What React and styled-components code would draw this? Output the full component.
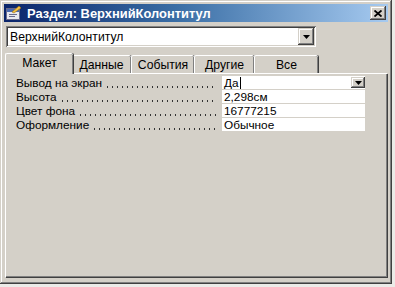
import * as React from 'react';
import styled, { createGlobalStyle } from 'styled-components';

const FACE = '#d4d0c8';
const FONT = '"Liberation Sans", Arial, sans-serif';
const TEXT_SIZE = '11.8px';

const TABS = ['Макет', 'Данные', 'События', 'Другие', 'Все'];
const TAB_WIDTHS = [64, 60, 63, 60, 64];

const PROPERTIES = [
  { label: 'Вывод на экран', value: 'Да', dropdown: true },
  { label: 'Высота', value: '2,298см' },
  { label: 'Цвет фона', value: '16777215' },
  { label: 'Оформление', value: 'Обычное' },
];

const GlobalStyle = createGlobalStyle`
  html, body {
    margin: 0;
    padding: 0;
    background: #ecebe8;
  }
  body {
    font-family: ${FONT};
    font-size: 12px;
  }
`;

const Window = styled.div`
  box-sizing: border-box;
  width: 392px;
  height: 284px;
  padding: 4px;
  background: ${FACE};
  display: flex;
  flex-direction: column;
  box-shadow:
    inset -1px -1px #404040,
    inset 1px 1px ${FACE},
    inset -2px -2px #808080,
    inset 2px 2px #ffffff;
`;

const TitleBar = styled.div`
  height: 18px;
  display: flex;
  align-items: center;
  padding: 0 2px 0 2px;
  background: linear-gradient(to right, #0a246a 0%, #3a6ea5 45%, #a6caf0 100%);
`;

const Title = styled.div`
  flex: 1;
  margin-left: 6px;
  color: #fff;
  font-family: ${FONT};
  font-weight: bold;
  font-size: 12.9px;
  white-space: nowrap;
`;

const BevelButton = styled.div`
  box-sizing: border-box;
  width: ${(p) => p.$w}px;
  height: ${(p) => p.$h}px;
  background: ${FACE};
  display: flex;
  align-items: center;
  justify-content: center;
  box-shadow:
    inset -1px -1px #404040,
    inset 1px 1px ${FACE},
    inset -2px -2px #808080,
    inset 2px 2px #ffffff;
`;

const Body = styled.div`
  flex: 1;
  display: flex;
  flex-direction: column;
  padding: 4px 1px 3px 1px;
`;

const Combo = styled.div`
  box-sizing: border-box;
  width: 310px;
  height: 21px;
  margin-left: 1px;
  padding: 2px;
  background: #fff;
  display: flex;
  align-items: center;
  box-shadow:
    inset 1px 1px #808080,
    inset -1px -1px #ffffff,
    inset 2px 2px #404040,
    inset -2px -2px ${FACE};
`;

const ComboText = styled.div`
  flex: 1;
  padding-left: 2px;
  color: #000;
  font-size: 12.2px;
`;

const TabStrip = styled.div`
  display: flex;
  align-items: flex-end;
  height: 20px;
  margin-top: 6px;
  padding-left: 2px;
`;

const Tab = styled.div`
  box-sizing: border-box;
  width: ${(p) => p.$w + (p.$active ? 4 : 0)}px;
  height: ${(p) => (p.$active ? 21 : 18)}px;
  margin: 0 ${(p) => (p.$active ? -2 : 0)}px ${(p) => (p.$active ? -1 : 0)}px;
  position: relative;
  z-index: ${(p) => (p.$active ? 1 : 0)};
  display: flex;
  align-items: center;
  justify-content: center;
  padding-bottom: ${(p) => (p.$active ? 2 : 0)}px;
  background: ${FACE};
  color: #000;
  font-size: 12.2px;
  border-top: 1px solid #fff;
  border-left: 1px solid #fff;
  border-radius: 2px 2px 0 0;
  box-shadow: inset -1px 0 #808080, 1px 0 #404040;
`;

const Panel = styled.div`
  flex: 1;
  box-sizing: border-box;
  padding: 2px 22px 0 0;
  display: flex;
  flex-direction: column;
  gap: 1px;
  border-top: 1px solid #fff;
  border-left: 1px solid #fff;
  box-shadow: inset -1px -1px #808080, 1px 1px #404040;
`;

const Row = styled.div`
  display: flex;
  height: 13px;
  align-items: stretch;
`;

const Label = styled.div`
  width: 216px;
  box-sizing: border-box;
  padding-left: 10px;
  display: flex;
  align-items: center;
  color: #000;
  font-size: ${TEXT_SIZE};
  white-space: nowrap;
`;

const Leader = styled.div`
  flex: 1;
  align-self: stretch;
  margin: 0 6px 0 5px;
  background-image: linear-gradient(to right, #333 1.5px, transparent 1.5px);
  background-size: 5px 2px;
  background-repeat: repeat-x;
  background-position: 0 10px;
`;

const Value = styled.div`
  flex: 1;
  display: flex;
  align-items: center;
  background: #fff;
  padding-left: 2px;
  color: #000;
  font-size: ${TEXT_SIZE};
  white-space: nowrap;
`;

const Caret = styled.span`
  display: inline-block;
  width: 1px;
  height: 12px;
  background: #000;
  margin-left: 1px;
`;

const Fill = styled.div`
  flex: 1;
`;

const Arrow = () => (
  <svg width="7" height="4" viewBox="0 0 7 4">
    <path d="M0 0h7L3.5 4z" fill="#000" />
  </svg>
);

const CloseIcon = () => (
  <svg width="8" height="7" viewBox="0 0 8 7">
    <path d="M0.5 0.5L7.5 6.5M7.5 0.5L0.5 6.5" stroke="#000" strokeWidth="1.8" />
  </svg>
);

const FormIcon = () => (
  <svg width="15" height="14" viewBox="0 0 15 14">
    <rect x="0.5" y="2.5" width="13" height="11" fill="#e8e8f0" stroke="#6a6a8a" />
    <rect x="1" y="3" width="12" height="3" fill="#4a6ab0" />
    <rect x="3" y="8" width="8" height="1" fill="#6a6a8a" />
    <rect x="3" y="10" width="6" height="1" fill="#6a6a8a" />
    <path d="M6 6L13 0L15 2L8 7z" fill="#f4c040" stroke="#a07010" strokeWidth="0.6" />
  </svg>
);

const App = () => (
  <>
    <GlobalStyle />
    <Window>
      <TitleBar>
        <FormIcon />
        <Title>Раздел: ВерхнийКолонтитул</Title>
        <BevelButton $w={16} $h={14}>
          <CloseIcon />
        </BevelButton>
      </TitleBar>
      <Body>
        <Combo>
          <ComboText>ВерхнийКолонтитул</ComboText>
          <BevelButton $w={16} $h={17}>
            <Arrow />
          </BevelButton>
        </Combo>
        <TabStrip>
          {TABS.map((tab, i) => (
            <Tab key={tab} $w={TAB_WIDTHS[i]} $active={i === 0}>{tab}</Tab>
          ))}
        </TabStrip>
        <Panel>
          {PROPERTIES.map((prop) => (
            <Row key={prop.label}>
              <Label>
                {prop.label}
                <Leader />
              </Label>
              <Value>
                {prop.value}
                {prop.dropdown && <Caret />}
                {prop.dropdown && <Fill />}
                {prop.dropdown && (
                  <BevelButton $w={14} $h={11}>
                    <Arrow />
                  </BevelButton>
                )}
              </Value>
            </Row>
          ))}
        </Panel>
      </Body>
    </Window>
  </>
);

export default App;
